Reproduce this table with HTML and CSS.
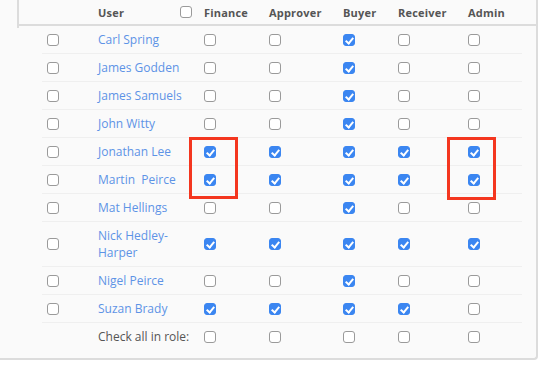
FILE: index.html
```html
<!DOCTYPE html>
<html>
<head>
<meta charset="utf-8">
<link rel="stylesheet" href="styles.css">
</head>
<body>
<div class="panel">
  <div class="head-wrap">
    <div class="head grid-head">
      <div></div>
      <div class="user-head"><span>User</span><span class="cb"></span></div>
      <div>Finance</div>
      <div>Approver</div>
      <div>Buyer</div>
      <div>Receiver</div>
      <div>Admin</div>
    </div>
  </div>
  <div class="rows">
    <div class="row"><div class="sel"><span class="cb"></span></div><a class="name">Carl Spring</a><div><span class="cb"></span></div><div><span class="cb"></span></div><div><span class="cb on"></span></div><div><span class="cb"></span></div><div><span class="cb"></span></div></div>
    <div class="row"><div class="sel"><span class="cb"></span></div><a class="name">James Godden</a><div><span class="cb"></span></div><div><span class="cb"></span></div><div><span class="cb on"></span></div><div><span class="cb"></span></div><div><span class="cb"></span></div></div>
    <div class="row"><div class="sel"><span class="cb"></span></div><a class="name">James Samuels</a><div><span class="cb"></span></div><div><span class="cb"></span></div><div><span class="cb on"></span></div><div><span class="cb"></span></div><div><span class="cb"></span></div></div>
    <div class="row"><div class="sel"><span class="cb"></span></div><a class="name">John Witty</a><div><span class="cb"></span></div><div><span class="cb"></span></div><div><span class="cb on"></span></div><div><span class="cb"></span></div><div><span class="cb"></span></div></div>
    <div class="row"><div class="sel"><span class="cb"></span></div><a class="name">Jonathan Lee</a><div><span class="cb on"></span></div><div><span class="cb on"></span></div><div><span class="cb on"></span></div><div><span class="cb on"></span></div><div><span class="cb on"></span></div></div>
    <div class="row"><div class="sel"><span class="cb"></span></div><a class="name">Martin&nbsp; Peirce</a><div><span class="cb on"></span></div><div><span class="cb on"></span></div><div><span class="cb on"></span></div><div><span class="cb on"></span></div><div><span class="cb on"></span></div></div>
    <div class="row"><div class="sel"><span class="cb"></span></div><a class="name">Mat Hellings</a><div><span class="cb"></span></div><div><span class="cb"></span></div><div><span class="cb on"></span></div><div><span class="cb"></span></div><div><span class="cb"></span></div></div>
    <div class="row"><div class="sel"><span class="cb"></span></div><a class="name">Nick Hedley-Harper</a><div><span class="cb on"></span></div><div><span class="cb on"></span></div><div><span class="cb on"></span></div><div><span class="cb on"></span></div><div><span class="cb on"></span></div></div>
    <div class="row"><div class="sel"><span class="cb"></span></div><a class="name">Nigel Peirce</a><div><span class="cb"></span></div><div><span class="cb"></span></div><div><span class="cb on"></span></div><div><span class="cb"></span></div><div><span class="cb"></span></div></div>
    <div class="row"><div class="sel"><span class="cb"></span></div><a class="name">Suzan Brady</a><div><span class="cb on"></span></div><div><span class="cb on"></span></div><div><span class="cb on"></span></div><div><span class="cb on"></span></div><div><span class="cb"></span></div></div>
    <div class="row last"><div class="sel"></div><div class="label">Check all in role:</div><div><span class="cb"></span></div><div><span class="cb"></span></div><div><span class="cb"></span></div><div><span class="cb"></span></div><div><span class="cb"></span></div></div>
  </div>
  <div class="mark mark-finance"></div>
  <div class="mark mark-admin"></div>
</div>
</body>
</html>
```

FILE: styles.css
```css
html, body {
  margin: 0;
  padding: 0;
  background: #ffffff;
}
body {
  font-family: "Open Sans", "Liberation Sans", sans-serif;
  font-size: 12px;
  color: #555;
}
.panel {
  position: relative;
  width: 536px;
  height: 358px;
  background: #fafafa;
  border-right: 2px solid #dcdcdc;
  border-bottom: 2px solid #dcdcdc;
  border-bottom-right-radius: 4px;
}
.head-wrap {
  position: relative;
  margin-left: 17px;
  padding-left: 2px;
}
.head-wrap::before {
  content: "";
  position: absolute;
  left: 0;
  top: 0;
  width: 2px;
  height: 28px;
  background: #dcdcdc;
}
.head {
  display: grid;
  grid-template-columns: 79px 106px 65px 74px 55px 70px 54px;
  height: 24px;
  align-items: center;
  border-bottom: 2px solid #dcdcdc;
  font-size: 11px;
  font-weight: 700;
  color: #555;
  letter-spacing: 0.2px;
}
.user-head {
  display: flex;
  align-items: center;
  justify-content: space-between;
  padding-right: 12px;
}
.rows {
  margin-left: 42px;
  width: 480px;
}
.row {
  display: grid;
  grid-template-columns: 56px 106px 65px 74px 55px 70px 54px;
  align-items: center;
  padding: 5px 0;
  line-height: 17px;
  border-bottom: 1px solid #efefef;
}
.row.last {
  border-bottom: none;
}
.row > div {
  display: flex;
  align-items: center;
}
.sel {
  padding-left: 5px;
}
.name {
  color: #5d93e6;
  padding-right: 10px;
  text-decoration: none;
}
.label {
  color: #555;
}
.cb {
  display: inline-block;
  box-sizing: border-box;
  position: relative;
  width: 12px;
  height: 12px;
  border: 1px solid #9a9a9a;
  border-radius: 3px;
  background: #fff;
}
.cb.on {
  background: #3b86f1;
  border-color: #3b86f1;
}
.cb.on::after {
  content: "";
  position: absolute;
  left: 3px;
  top: 1px;
  width: 3px;
  height: 6px;
  border-right: 2px solid #fff;
  border-bottom: 2px solid #fff;
  transform: rotate(40deg);
}
.mark {
  position: absolute;
  box-sizing: border-box;
  border: 3px solid #f4361f;
  width: 49px;
  height: 62px;
  top: 137px;
}
.mark-finance {
  left: 189px;
}
.mark-admin {
  left: 447px;
  height: 63px;
}
```
